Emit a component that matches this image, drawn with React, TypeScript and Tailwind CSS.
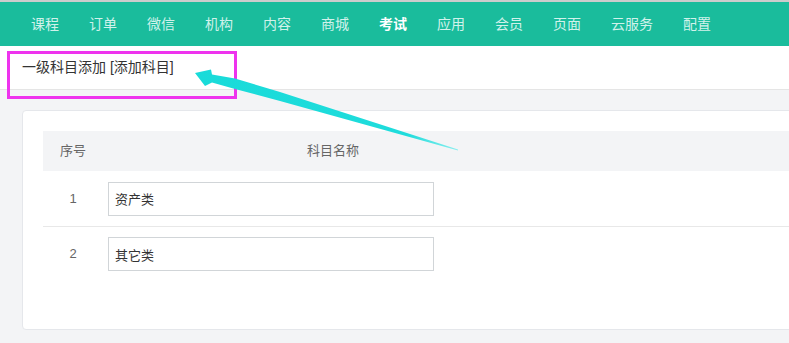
import React from "react";

const navItems = ["课程", "订单", "微信", "机构", "内容", "商城", "考试", "应用", "会员", "页面", "云服务", "配置"];

const rows = [
  { no: "1", name: "资产类" },
  { no: "2", name: "其它类" },
];

export default function App() {
  return (
    <div
      className="relative w-full h-[343px] overflow-hidden bg-[#f3f4f6]"
      style={{ fontFamily: '"Liberation Sans", "Noto Sans CJK SC", sans-serif' }}
    >
      <div className="h-[2px] bg-[#cccccc]" />
      <nav className="h-[44px] bg-[#1abc9c] flex items-center pl-[16px]">
        {navItems.map((item) => (
          <span
            key={item}
            className={
              item === "考试"
                ? "px-[15px] text-[14px] font-bold text-white leading-none"
                : "px-[15px] text-[14px] text-[#d1f2eb] leading-none"
            }
          >
            {item}
          </span>
        ))}
      </nav>
      <div className="h-[44px] bg-white border-b border-[#e5e5e5] flex items-center pl-[22px] text-[14px] text-[#333333]">
        一级科目添加 [添加科目]
      </div>
      <div className="pt-[20px] pl-[22px]">
        <div className="w-[1000px] h-[220px] bg-white border border-[#e5e7eb] rounded-[4px] p-[20px]">
          <div className="flex h-[40px] items-center bg-[#f3f4f6] text-[13px] text-[#666666]">
            <div className="w-[60px] text-center">序号</div>
            <div className="w-[460px] text-center">科目名称</div>
          </div>
          {rows.map((r, i) => (
            <div
              key={r.no}
              className={
                i === 0
                  ? "flex h-[56px] items-center border-b border-[#e8e8e8]"
                  : "flex h-[54px] items-center"
              }
            >
              <div className="w-[60px] text-center text-[13px] text-[#666666]">{r.no}</div>
              <div className="pl-[5px]">
                <input
                  readOnly
                  value={r.name}
                  className="w-[326px] h-[34px] border border-[#d1d5d8] px-[6px] text-[13px] text-[#333333] outline-none"
                />
              </div>
            </div>
          ))}
        </div>
      </div>

      {/* annotation box */}
      <div className="absolute left-[7px] top-[51px] w-[230px] h-[48px] border-[3px] border-[#ee33ee] pointer-events-none" />

      {/* annotation arrow */}
      <svg className="absolute left-0 top-0 pointer-events-none" width="789" height="343">
        <defs>
          <linearGradient id="arrowGrad" gradientUnits="userSpaceOnUse" x1="195" y1="73" x2="460" y2="150">
            <stop offset="0" stopColor="#19dbd9" />
            <stop offset="0.8" stopColor="#1fdcdc" />
            <stop offset="1" stopColor="#8ff0f0" />
          </linearGradient>
        </defs>
        <polygon
          fill="url(#arrowGrad)"
          points="195,73 211,69.5 212,74.5 235,78.5 280,92 458,149.6 458,150.6 280,101 235,89 212,82.5 205,86"
        />
      </svg>
    </div>
  );
}
